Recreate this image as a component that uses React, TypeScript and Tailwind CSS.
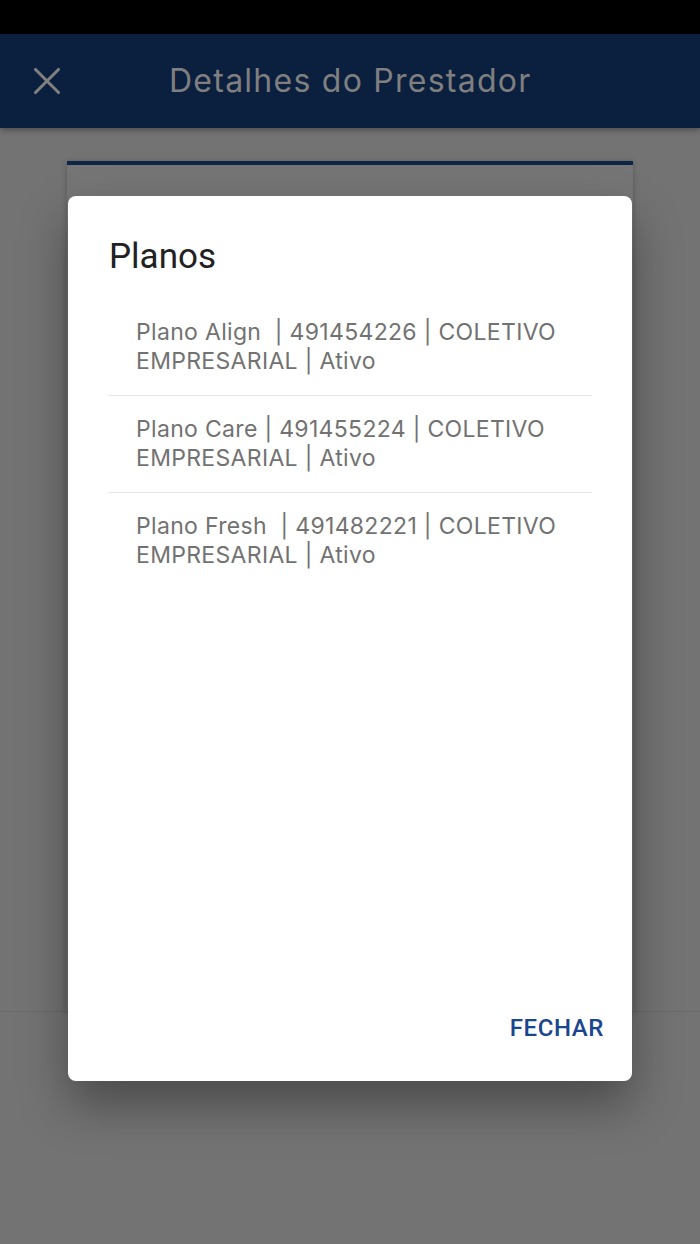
import { X } from 'lucide-react'

const planos = [
  'Plano Align  | 491454226 | COLETIVO EMPRESARIAL | Ativo',
  'Plano Care | 491455224 | COLETIVO EMPRESARIAL | Ativo',
  'Plano Fresh  | 491482221 | COLETIVO EMPRESARIAL | Ativo',
]

export default function App() {
  return (
    <div className="relative flex h-[1244px] w-[700px] flex-col overflow-hidden bg-[#737373] font-['Roboto',sans-serif]">
      {/* page under the dimmed overlay */}
      <div className="h-[34px] shrink-0 bg-black" />
      <header className="relative z-10 flex h-[94px] shrink-0 items-center bg-[#0b1f3f] shadow-[0_2px_6px_rgba(0,0,0,0.35)]">
        <button type="button" className="ml-[24px] flex h-[46px] w-[46px] items-center justify-center text-[#808080]">
          <X size={46} strokeWidth={1.6} />
        </button>
        <h1 className="ml-[99px] font-['Inter',sans-serif] text-[32px] leading-none font-normal tracking-[1.25px] text-[#7f7f7f]">
          Detalhes do Prestador
        </h1>
      </header>
      <div className="flex h-[884px] shrink-0 flex-col border-b border-[#6a6a6a] pt-[33px]">
        <div className="mx-[67px] h-full border-t-[4px] border-[#0d2547] bg-[#757575] shadow-[0_1px_6px_rgba(0,0,0,0.25)]" />
      </div>

      {/* dialog */}
      <div className="absolute top-[196px] left-[68px] flex h-[885px] w-[564px] flex-col rounded-[8px] bg-white shadow-[0_24px_48px_rgba(0,0,0,0.35)]">
        <h2 className="mt-[41px] ml-[41px] text-[35px] leading-[40px] font-normal text-[#212121]">Planos</h2>
        <ul className="mt-[22px] mr-[40px] ml-[40px]">
          {planos.map((p, i) => (
            <li
              key={p}
              className={
                "py-[19px] pr-[4px] pl-[28px] font-['Inter',sans-serif] text-[23px] leading-[29px] tracking-[0.32px] whitespace-pre-wrap text-[#727272] " +
                (i < planos.length - 1 ? 'border-b border-[#e6e6e6]' : '')
              }
            >
              {p}
            </li>
          ))}
        </ul>
        <div className="mt-auto mr-[28px] mb-[41px] flex justify-end">
          <button type="button" className="text-[24px] leading-none font-medium tracking-[0.6px] text-[#1a468f]">
            FECHAR
          </button>
        </div>
      </div>
    </div>
  )
}
